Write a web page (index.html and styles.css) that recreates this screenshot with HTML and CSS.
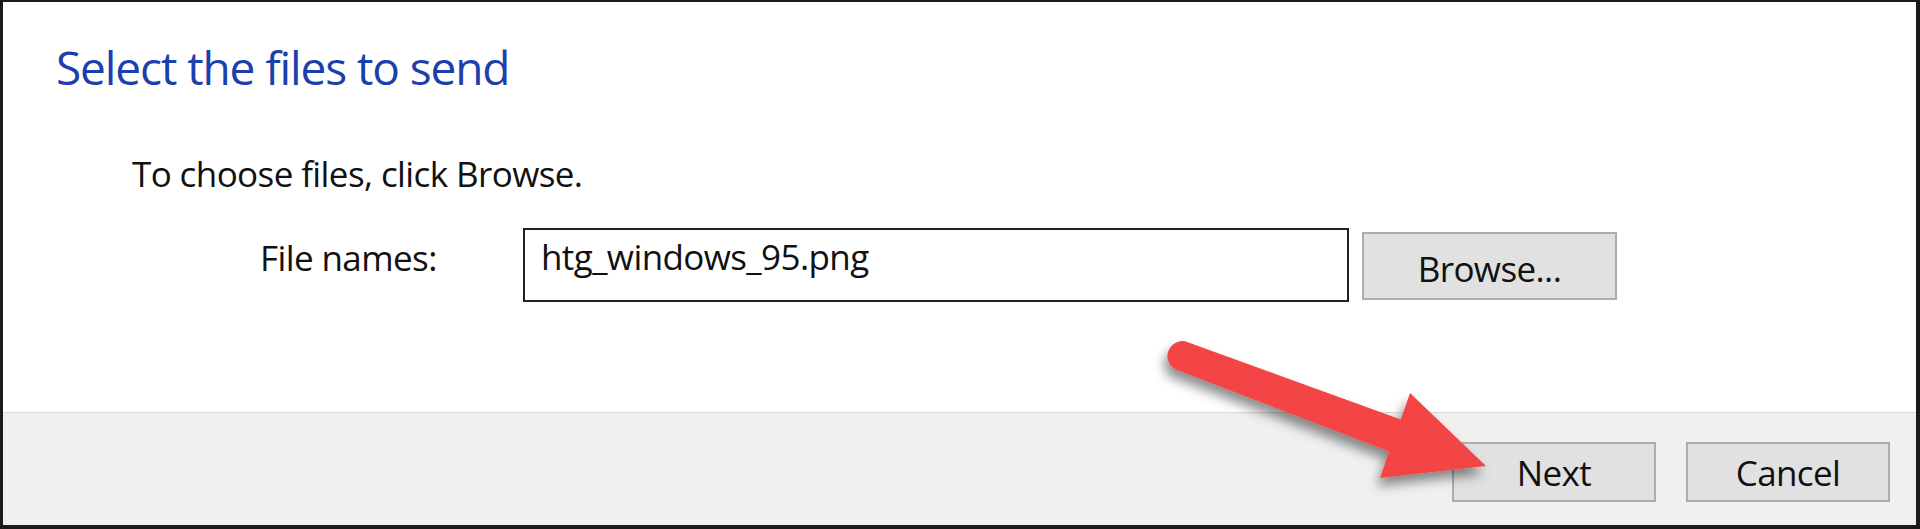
FILE: index.html
```html
<!DOCTYPE html>
<html lang="en">
<head>
<meta charset="utf-8">
<title>Select the files to send</title>
<link rel="stylesheet" href="styles.css">
</head>
<body>
<div class="dialog">
  <main class="content">
    <h1 class="title">Select the files to send</h1>
    <p class="hint">To choose files, click Browse.</p>
    <div class="file-row">
      <label class="file-label" for="files">File names:</label>
      <div class="textbox" id="files">htg_windows_95.png</div>
      <button class="btn btn-browse" type="button">Browse...</button>
    </div>
  </main>
  <footer class="footer">
    <button class="btn btn-footer" type="button">Next</button>
    <button class="btn btn-footer" type="button">Cancel</button>
  </footer>
</div>
<svg class="arrow" width="1920" height="529" viewBox="0 0 1920 529" xmlns="http://www.w3.org/2000/svg">
  <defs>
    <filter id="arrow-shadow" x="-20%" y="-30%" width="140%" height="170%">
      <feDropShadow dx="-3" dy="8" stdDeviation="6" flood-color="#000" flood-opacity="0.45"/>
    </filter>
  </defs>
  <path filter="url(#arrow-shadow)" fill="#f34545" d="M 1187.1 341.9 L 1400.8 419.5 L 1410 393 L 1486 466 L 1380 478 L 1389.2 451.5 L 1176.9 370.1 A 15 15 0 0 1 1187.1 341.9 Z"/>
</svg>
</body>
</html>
```

FILE: styles.css
```css
* {
  box-sizing: border-box;
}

html,
body {
  margin: 0;
  padding: 0;
}

body {
  position: relative;
  width: 1920px;
  height: 529px;
  overflow: hidden;
  background: #ffffff;
  font-family: "Open Sans", "Noto Sans", sans-serif;
  color: #111111;
}

.dialog {
  height: 529px;
  display: flex;
  flex-direction: column;
  border-style: solid;
  border-color: #1b1b1b;
  border-width: 2px 4px 4px 3px;
  background: #ffffff;
}

.content {
  flex: none;
  height: 410px;
  padding-left: 53px;
}

.title {
  margin: 37px 0 0;
  font-size: 46px;
  line-height: 56px;
  font-weight: 400;
  letter-spacing: -1.1px;
  color: #1c3fae;
}

.hint {
  margin: 57px 0 0 76px;
  font-size: 35px;
  line-height: 44px;
  letter-spacing: -0.6px;
}

.file-row {
  display: flex;
  align-items: flex-start;
  margin: 32px 0 0 204px;
}

.file-label {
  width: 263px;
  margin-top: 8px;
  font-size: 35px;
  line-height: 44px;
  letter-spacing: -0.6px;
}

.textbox {
  width: 826px;
  height: 74px;
  border: 2px solid #222222;
  padding: 5px 0 0 16px;
  font-size: 35px;
  line-height: 44px;
  letter-spacing: -0.6px;
  background: #ffffff;
}

.btn {
  display: flex;
  align-items: center;
  justify-content: center;
  padding: 0;
  background: #e1e1e1;
  border: 2px solid #adadad;
  font-family: inherit;
  font-size: 35px;
  line-height: 1;
  letter-spacing: -0.6px;
  color: #111111;
}

.btn-browse {
  width: 255px;
  height: 68px;
  margin: 4px 0 0 13px;
  padding-top: 4px;
}

.footer {
  flex: 1;
  display: flex;
  justify-content: flex-end;
  align-items: flex-start;
  gap: 30px;
  padding: 29px 26px 0 0;
  background: #f0f0f0;
  border-top: 1px solid #dadada;
}

.btn-footer {
  width: 204px;
  height: 60px;
}

.arrow {
  position: absolute;
  left: 0;
  top: 0;
  pointer-events: none;
}
```
